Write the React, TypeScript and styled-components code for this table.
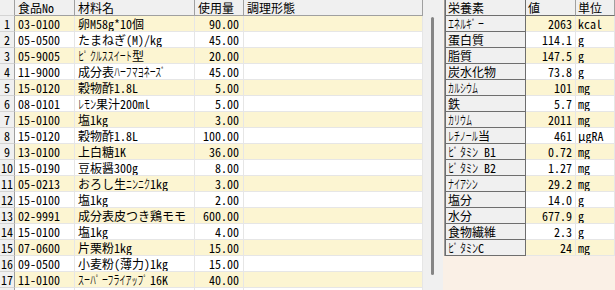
import React from "react";
import styled, { createGlobalStyle } from "styled-components";

const Global = createGlobalStyle`
  html, body { margin: 0; padding: 0; background: #ffffff; }
  #root { width: 615px; height: 290px; }
`;

const YELLOW = "#fcf5d2";
const LINEN = "#faf0e6";
const FACE = "#f0f0f0";

const Screen = styled.div`
  display: flex;
  width: 615px;
  height: 290px;
  overflow: hidden;
  background: ${FACE};
  font-family: "MS UI Gothic", "Noto Sans Mono CJK JP", "Noto Sans CJK JP", monospace;
  font-size: 12px;
  color: #000;
`;

/* half-width katakana: full-width glyphs squeezed into 6px cells, as on a Windows UI font */
const HALF = "｡｢｣､･ｦｧｨｩｪｫｬｭｮｯｰｱｲｳｴｵｶｷｸｹｺｻｼｽｾｿﾀﾁﾂﾃﾄﾅﾆﾇﾈﾉﾊﾋﾌﾍﾎﾏﾐﾑﾒﾓﾔﾕﾖﾗﾘﾙﾚﾛﾜﾝﾞﾟ";
const FULL = "。「」、・ヲァィゥェォャュョッーアイウエオカキクケコサシスセソタチツテトナニヌネノハヒフヘホマミムメモヤユヨラリルレロワン゛゜";

const Hankaku = styled.span<{ $n: number }>`
  display: inline-block;
  width: ${(p) => p.$n * 6}px;
  white-space: pre;
`;

const HankakuGlyphs = styled.span`
  display: inline-block;
  font-family: "Noto Sans CJK JP", sans-serif;
  transform: scaleX(0.5);
  transform-origin: 0 50%;
  white-space: pre;
`;

function Txt({ s }: { s: string }) {
  const parts = s.split(/([\uFF61-\uFF9F]+)/);
  return (
    <>
      {parts.map((p, i) => {
        if (!/[\uFF61-\uFF9F]/.test(p)) return <React.Fragment key={i}>{p}</React.Fragment>;
        const chars = Array.from(p);
        const wide = chars.map((c) => FULL[HALF.indexOf(c)] ?? c).join("");
        return (
          <Hankaku key={i} $n={chars.length}>
            <HankakuGlyphs>{wide}</HankakuGlyphs>
          </Hankaku>
        );
      })}
    </>
  );
}

/* ---------- left grid ---------- */

const LeftGrid = styled.div`
  flex: none;
  width: 423px;
  display: flex;
  flex-direction: column;
  background: #ffffff;
`;

const LeftRow = styled.div`
  flex: none;
  display: grid;
  grid-template-columns: 15px 60px 120px 49px 179px;
  height: 16px;
`;

const BaseCell = styled.div`
  box-sizing: border-box;
  height: 16px;
  line-height: 15px;
  white-space: pre;
  overflow: hidden;
`;

const ColHead = styled(BaseCell)`
  background: ${FACE};
  border-right: 1px solid #a0a0a0;
  border-bottom: 1px solid #a0a0a0;
  padding: 0 3px;
`;

const RowNum = styled(BaseCell)`
  background: ${FACE};
  border-right: 1px solid #a0a0a0;
  border-bottom: 1px solid #d4d4d4;
  text-align: center;
  padding: 0;
`;

const DataCell = styled(BaseCell)<{ $alt: boolean; $num?: boolean }>`
  background: ${(p) => (p.$alt ? YELLOW : "#ffffff")};
  border-right: 1px solid #e6e6e6;
  border-bottom: 1px solid #e6e6e6;
  padding: ${(p) => (p.$num ? "0 4px 0 3px" : "0 3px")};
  text-align: ${(p) => (p.$num ? "right" : "left")};
`;

/* ---------- scrollbar ---------- */

const ScrollTrack = styled.div`
  flex: none;
  width: 20px;
  background: ${FACE};
  display: flex;
  justify-content: flex-start;
  padding: 17px 0 0 8px;
  box-sizing: border-box;
`;

const ScrollThumb = styled.div`
  width: 3px;
  height: 258px;
  border-radius: 1.5px;
  background: #858585;
`;

/* ---------- right panel ---------- */

const RightPanel = styled.div`
  flex: 1;
  background: ${LINEN};
  padding-left: 1px;
  display: flex;
  flex-direction: column;
  align-items: stretch;
`;

const NutriGrid = styled.div`
  display: flex;
  flex-direction: column;
  border-left: 1px solid #9a9a9a;
`;

const NutriRow = styled.div`
  display: grid;
  grid-template-columns: 81px 50px 1fr;
  height: 16px;
`;

const NameCell = styled(BaseCell)`
  background: ${FACE};
  border-left: 1px solid #6e6e6e;
  border-right: 1px solid #6e6e6e;
  border-bottom: 1px solid #6e6e6e;
  padding: 0 2px;
`;

const NutriHead = styled(BaseCell)`
  background: ${FACE};
  border-right: 1px solid #a0a0a0;
  border-bottom: 1px solid #6e6e6e;
  padding: 0 2px;
`;

const ValueCell = styled(BaseCell)<{ $alt: boolean; $num?: boolean }>`
  background: ${(p) => (p.$alt ? YELLOW : "#ffffff")};
  border-right: 1px solid #e6e6e6;
  border-bottom: 1px solid #e6e6e6;
  padding: ${(p) => (p.$num ? "0 3px 0 2px" : "0 2px")};
  text-align: ${(p) => (p.$num ? "right" : "left")};
`;

type Item = [string, string, string];

const items: Item[] = [
  ["03-0100", "卵M58g*10個", "90.00"],
  ["05-0500", "たまねぎ(M)/kg", "45.00"],
  ["05-9005", "ﾋﾟｸﾙｽｽｲｰﾄ型", "20.00"],
  ["11-9000", "成分表ﾊｰﾌﾏﾖﾈｰｽﾞ", "45.00"],
  ["15-0120", "穀物酢1.8L", "5.00"],
  ["08-0101", "ﾚﾓﾝ果汁200ml", "5.00"],
  ["15-0100", "塩1kg", "3.00"],
  ["15-0120", "穀物酢1.8L", "100.00"],
  ["13-0100", "上白糖1K", "36.00"],
  ["15-0190", "豆板醤300g", "8.00"],
  ["05-0213", "おろし生ﾆﾝﾆｸ1kg", "3.00"],
  ["15-0100", "塩1kg", "2.00"],
  ["02-9991", "成分表皮つき鶏モモ", "600.00"],
  ["15-0100", "塩1kg", "4.00"],
  ["07-0600", "片栗粉1kg", "15.00"],
  ["09-0500", "小麦粉(薄力)1kg", "15.00"],
  ["11-0100", "ｽｰﾊﾟｰﾌﾗｲｱｯﾌﾟ16K", "40.00"],
];

const nutrients: Item[] = [
  ["ｴﾈﾙｷﾞｰ", "2063", "kcal"],
  ["蛋白質", "114.1", "g"],
  ["脂質", "147.5", "g"],
  ["炭水化物", "73.8", "g"],
  ["ｶﾙｼｳﾑ", "101", "mg"],
  ["鉄", "5.7", "mg"],
  ["ｶﾘｳﾑ", "2011", "mg"],
  ["ﾚﾁﾉｰﾙ当", "461", "μgRA"],
  ["ﾋﾞﾀﾐﾝ B1", "0.72", "mg"],
  ["ﾋﾞﾀﾐﾝ B2", "1.27", "mg"],
  ["ﾅｲｱｼﾝ", "29.2", "mg"],
  ["塩分", "14.0", "g"],
  ["水分", "677.9", "g"],
  ["食物繊維", "2.3", "g"],
  ["ﾋﾞﾀﾐﾝC", "24", "mg"],
];

export default function App() {
  return (
    <>
      <Global />
      <Screen>
        <LeftGrid>
          <LeftRow>
            <RowNum />
            <ColHead>食品No</ColHead>
            <ColHead>材料名</ColHead>
            <ColHead>使用量</ColHead>
            <ColHead>調理形態</ColHead>
          </LeftRow>
          {items.map(([code, name, qty], i) => {
            const alt = i % 2 === 0;
            return (
              <LeftRow key={i}>
                <RowNum>{i + 1}</RowNum>
                <DataCell $alt={alt}>{code}</DataCell>
                <DataCell $alt={alt}>
                  <Txt s={name} />
                </DataCell>
                <DataCell $alt={alt} $num>
                  {qty}
                </DataCell>
                <DataCell $alt={alt} />
              </LeftRow>
            );
          })}
          <LeftRow>
            <RowNum />
            <DataCell $alt={false} />
            <DataCell $alt={false} />
            <DataCell $alt={false} />
            <DataCell $alt={false} />
          </LeftRow>
        </LeftGrid>
        <ScrollTrack>
          <ScrollThumb />
        </ScrollTrack>
        <RightPanel>
          <NutriGrid>
            <NutriRow>
              <NameCell>栄養素</NameCell>
              <NutriHead>値</NutriHead>
              <NutriHead>単位</NutriHead>
            </NutriRow>
            {nutrients.map(([name, val, unit], i) => {
              const alt = i % 2 === 0;
              return (
                <NutriRow key={i}>
                  <NameCell>
                    <Txt s={name} />
                  </NameCell>
                  <ValueCell $alt={alt} $num>
                    {val}
                  </ValueCell>
                  <ValueCell $alt={alt}>{unit}</ValueCell>
                </NutriRow>
              );
            })}
          </NutriGrid>
        </RightPanel>
      </Screen>
    </>
  );
}
